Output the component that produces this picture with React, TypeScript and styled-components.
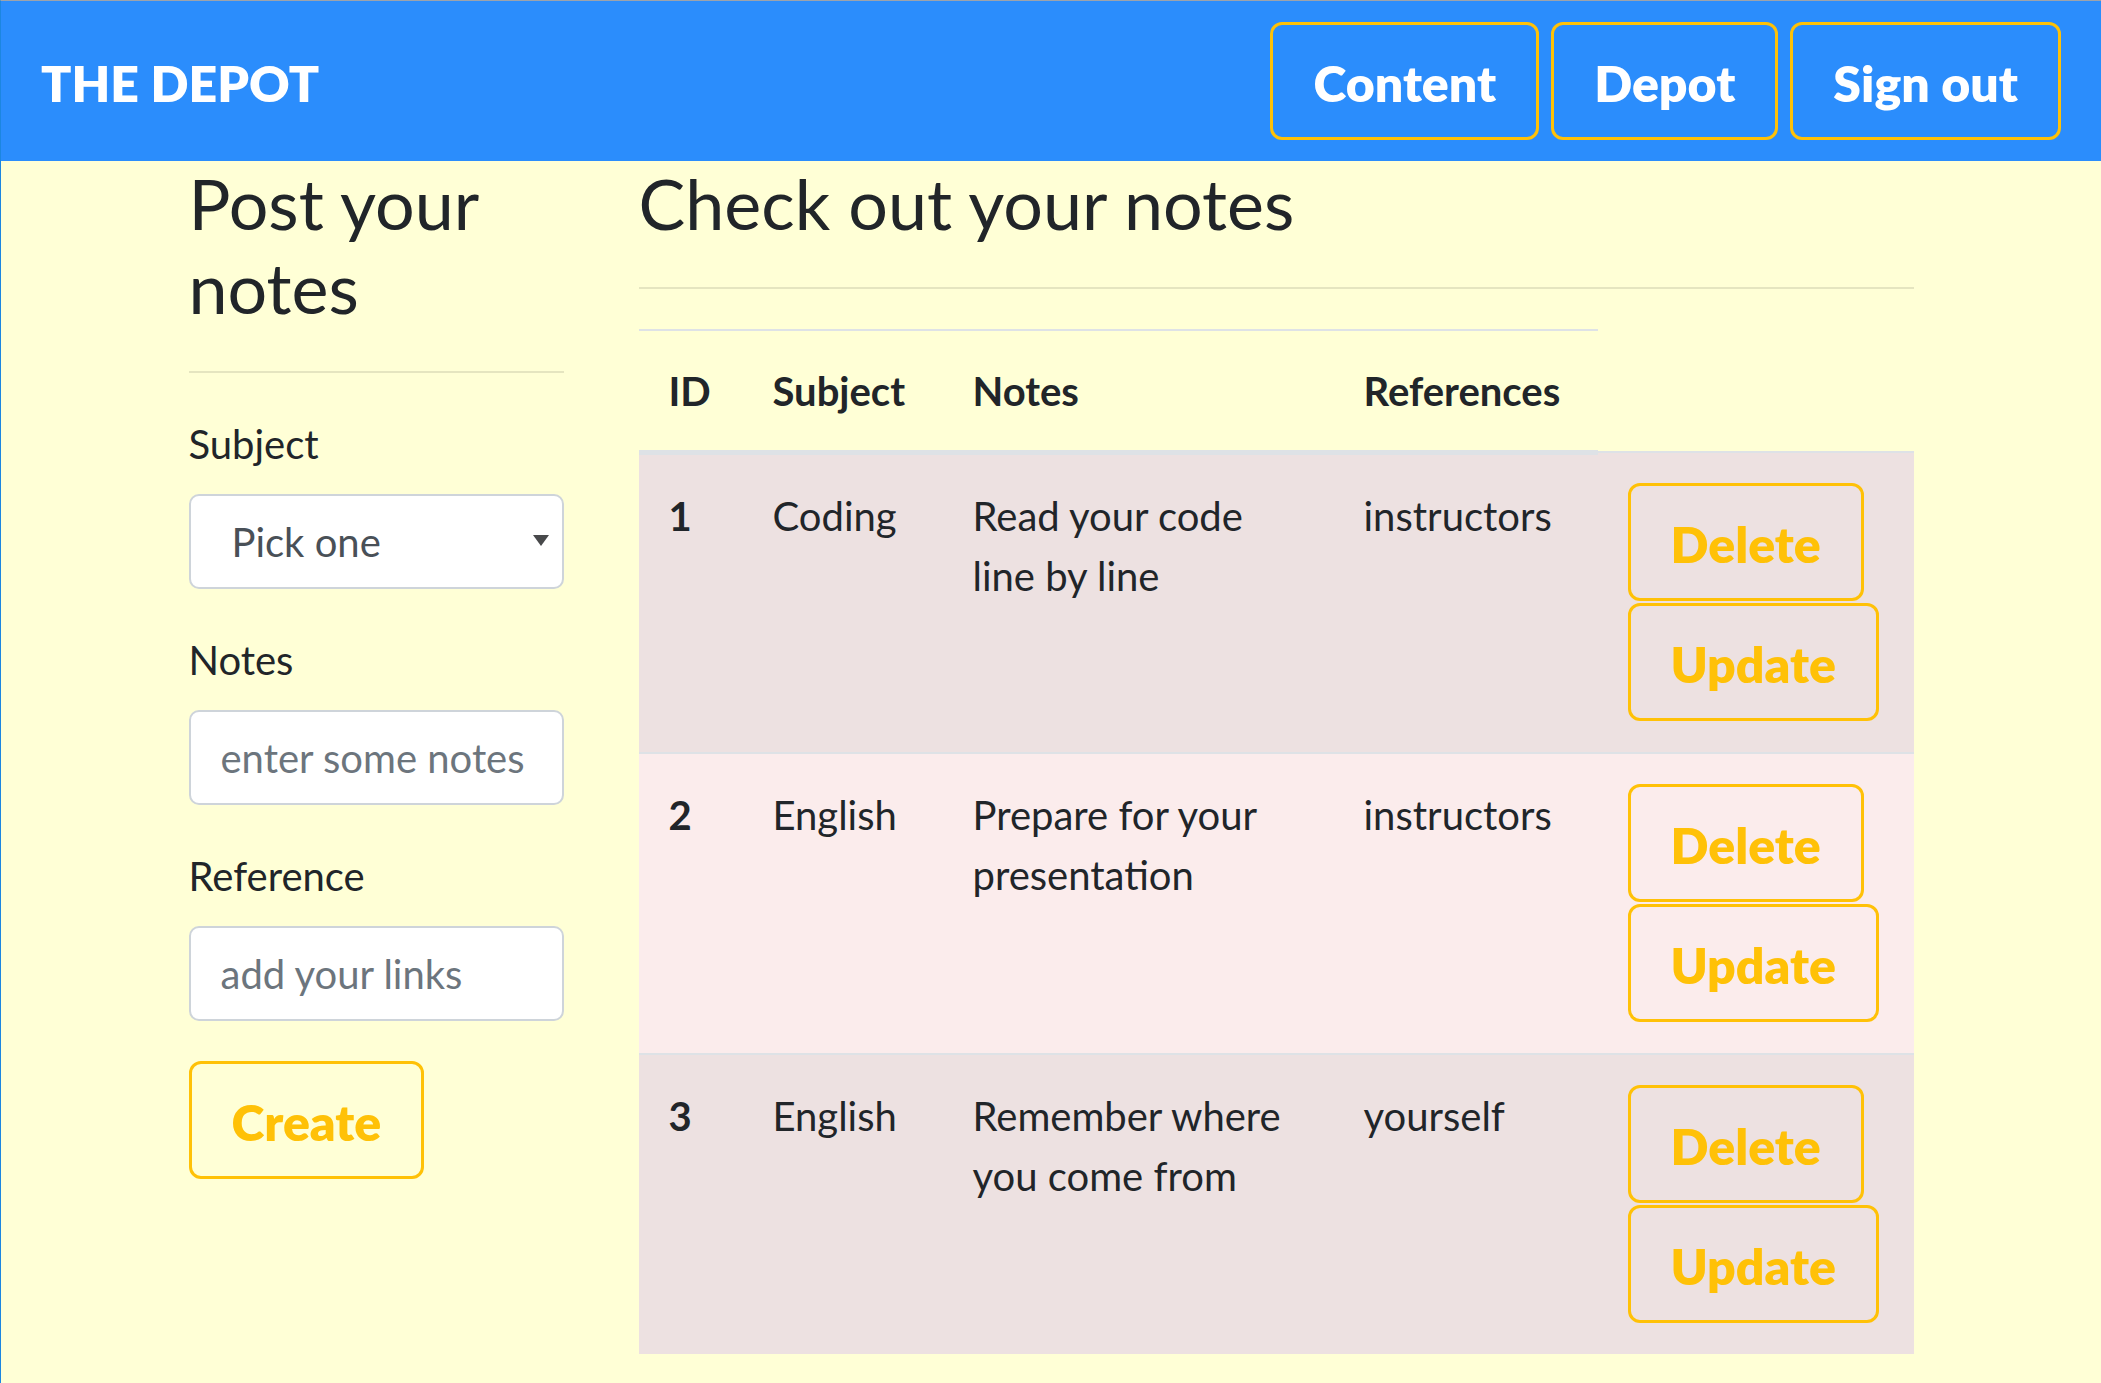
import React from 'react';
import styled, { createGlobalStyle } from 'styled-components';

const GlobalStyle = createGlobalStyle`
  *, *::before, *::after {
    box-sizing: border-box;
  }
  html, body {
    margin: 0;
    padding: 0;
  }
  body {
    height: 100vh;
    overflow: hidden;
    font-family: Lato, "Open Sans", sans-serif;
    font-size: 40px;
    line-height: 1.5;
    color: #212529;
    background: #ffffd6;
    border-top: 1px solid #9da3ab;
    border-left: 1px solid #1c86e0;
  }
`;

const Navbar = styled.nav`
  display: flex;
  align-items: center;
  justify-content: space-between;
  padding: 21px 40px;
  background: #2b8dfc;
`;

const Brand = styled.a`
  padding-top: 4px;
  font-size: 50px;
  font-weight: 800;
  line-height: 75px;
  color: #fff;
  text-decoration: none;
`;

const NavLinks = styled.div`
  display: flex;
  gap: 12px;
`;

const OutlineButton = styled.button<{ $light?: boolean }>`
  font-family: inherit;
  font-size: 50px;
  font-weight: 800;
  line-height: 74px;
  padding: 21px 40px 17px;
  border: 3px solid #ffc107;
  border-radius: 12px;
  background: transparent;
  color: ${(p) => (p.$light ? '#fff' : '#ffc107')};
  cursor: pointer;
  white-space: nowrap;
`;

const Container = styled.main`
  width: 1800px;
  margin: 0 auto;
  display: grid;
  grid-template-columns: 450px 1350px;
`;

const Column = styled.section`
  padding: 0 37.5px;
`;

const Heading = styled.h3`
  font-size: 70px;
  font-weight: 400;
  line-height: 1.2;
  margin: 0 0 20px;
`;

const Rule = styled.hr`
  margin: 41.5px 0 40px;
  border: 0;
  border-top: 2.5px solid rgba(0, 0, 0, 0.1);
`;

const FormGroup = styled.div`
  margin-bottom: 40px;
`;

const Label = styled.label`
  display: inline-block;
  margin-bottom: 20px;
  padding-top: 1px;
`;

const fieldStyles = `
  display: block;
  width: 100%;
  height: 95px;
  font-family: inherit;
  font-size: 40px;
  line-height: 1.5;
  color: #495057;
  background: #fff;
  border: 2.5px solid #ced4da;
  border-radius: 10px;
  outline: none;
`;

const TextInput = styled.input`
  ${fieldStyles}
  padding: 16px 30px 14px;

  &::placeholder {
    color: #6c757d;
  }
`;

const SelectWrap = styled.div`
  position: relative;
`;

const Select = styled.select`
  ${fieldStyles}
  appearance: none;
  padding: 16px 60px 14px 41px;
`;

const Arrow = styled.span`
  position: absolute;
  right: 15px;
  top: calc(50% - 6px);
  width: 0;
  height: 0;
  border-left: 8px solid transparent;
  border-right: 8px solid transparent;
  border-top: 11px solid #48494b;
  pointer-events: none;
`;

const Table = styled.table`
  width: 100%;
  border-collapse: collapse;
  table-layout: fixed;
`;

const Col = styled.col<{ $w?: number }>`
  width: ${(p) => (p.$w ? `${p.$w}px` : 'auto')};
`;

const HeadCell = styled.th`
  padding: 30px 30px 29px;
  text-align: left;
  vertical-align: bottom;
  font-weight: 700;
  border-top: 2.5px solid #dee2e6;
  border-bottom: 5px solid #dee2e6;
`;

const Row = styled.tr<{ $odd: boolean }>`
  background: ${(p) => (p.$odd ? '#ede1e1' : '#fbecec')};
`;

const Cell = styled.td<{ $bold?: boolean }>`
  padding: 30px;
  vertical-align: top;
  text-align: left;
  font-weight: ${(p) => (p.$bold ? 700 : 400)};
  border-top: 2.5px solid #dee2e6;
`;

const CellText = styled.div`
  padding-top: 1px;
`;

const ActionStack = styled.div`
  display: flex;
  flex-direction: column;
  align-items: flex-start;
  gap: 2px;
  margin-bottom: 1px;
`;

const notes = [
  { id: 1, subject: 'Coding', text: 'Read your code line by line', ref: 'instructors' },
  { id: 2, subject: 'English', text: 'Prepare for your presentation', ref: 'instructors' },
  { id: 3, subject: 'English', text: 'Remember where you come from', ref: 'yourself' },
];

const App: React.FC = () => {
  return (
    <>
      <GlobalStyle />
      <Navbar>
        <Brand href="#">THE DEPOT</Brand>
        <NavLinks>
          <OutlineButton $light type="button">Content</OutlineButton>
          <OutlineButton $light type="button">Depot</OutlineButton>
          <OutlineButton $light type="button">Sign out</OutlineButton>
        </NavLinks>
      </Navbar>
      <Container>
        <Column>
          <Heading>Post your notes</Heading>
          <Rule />
          <form onSubmit={(e) => e.preventDefault()}>
            <FormGroup>
              <Label htmlFor="subject">Subject</Label>
              <SelectWrap>
                <Select id="subject" defaultValue="">
                  <option value="">Pick one</option>
                  <option value="Coding">Coding</option>
                  <option value="English">English</option>
                </Select>
                <Arrow />
              </SelectWrap>
            </FormGroup>
            <FormGroup>
              <Label htmlFor="notes">Notes</Label>
              <TextInput id="notes" type="text" placeholder="enter some notes" />
            </FormGroup>
            <FormGroup>
              <Label htmlFor="reference">Reference</Label>
              <TextInput id="reference" type="text" placeholder="add your links" />
            </FormGroup>
            <OutlineButton type="submit">Create</OutlineButton>
          </form>
        </Column>
        <Column>
          <Heading>Check out your notes</Heading>
          <Rule />
          <Table>
            <colgroup>
              <Col $w={104} />
              <Col $w={200} />
              <Col $w={391} />
              <Col $w={264} />
              <Col />
            </colgroup>
            <thead>
              <tr>
                <HeadCell>ID</HeadCell>
                <HeadCell>Subject</HeadCell>
                <HeadCell>Notes</HeadCell>
                <HeadCell>References</HeadCell>
              </tr>
            </thead>
            <tbody>
              {notes.map((n, i) => (
                <Row key={n.id} $odd={i % 2 === 0}>
                  <Cell $bold><CellText>{n.id}</CellText></Cell>
                  <Cell><CellText>{n.subject}</CellText></Cell>
                  <Cell><CellText>{n.text}</CellText></Cell>
                  <Cell><CellText>{n.ref}</CellText></Cell>
                  <Cell>
                    <ActionStack>
                      <OutlineButton type="button">Delete</OutlineButton>
                      <OutlineButton type="button">Update</OutlineButton>
                    </ActionStack>
                  </Cell>
                </Row>
              ))}
            </tbody>
          </Table>
        </Column>
      </Container>
    </>
  );
};

export default App;
